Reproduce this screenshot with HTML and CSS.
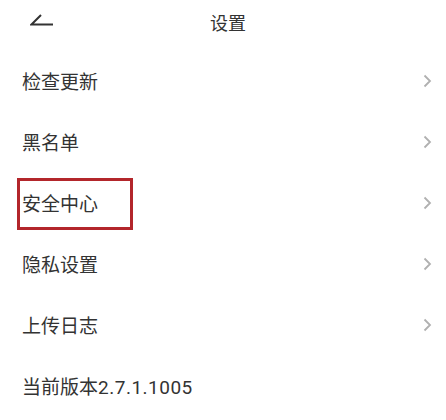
FILE: index.html
```html
<!DOCTYPE html>
<html lang="zh-CN">
<head>
    <meta charset="UTF-8">
    <meta name="viewport" content="width=device-width, initial-scale=1.0">
    <title>设置</title>
    <link rel="stylesheet" href="styles.css">
</head>
<body>
    <div class="page">
        <div class="header">
            <div class="back">
                <svg width="24" height="12" viewBox="0 0 24 12">
                    <path d="M11 1 L1.5 10.5 L23 10.5" fill="none" stroke="#333" stroke-width="2"/>
                </svg>
            </div>
            <div class="title">设置</div>
            <div class="spacer"></div>
        </div>

        <ul class="menu">
            <li class="row">
                <span>检查更新</span>
                <svg class="chevron" width="9" height="14" viewBox="0 0 9 14"><path d="M1.5 1.5 L7 7 L1.5 12.5" fill="none" stroke="#b0b0b0" stroke-width="1.8"/></svg>
            </li>
            <li class="row">
                <span>黑名单</span>
                <svg class="chevron" width="9" height="14" viewBox="0 0 9 14"><path d="M1.5 1.5 L7 7 L1.5 12.5" fill="none" stroke="#b0b0b0" stroke-width="1.8"/></svg>
            </li>
            <li class="row">
                <span>安全中心</span>
                <svg class="chevron" width="9" height="14" viewBox="0 0 9 14"><path d="M1.5 1.5 L7 7 L1.5 12.5" fill="none" stroke="#b0b0b0" stroke-width="1.8"/></svg>
                <div class="highlight"></div>
            </li>
            <li class="row">
                <span>隐私设置</span>
                <svg class="chevron" width="9" height="14" viewBox="0 0 9 14"><path d="M1.5 1.5 L7 7 L1.5 12.5" fill="none" stroke="#b0b0b0" stroke-width="1.8"/></svg>
            </li>
            <li class="row">
                <span>上传日志</span>
                <svg class="chevron" width="9" height="14" viewBox="0 0 9 14"><path d="M1.5 1.5 L7 7 L1.5 12.5" fill="none" stroke="#b0b0b0" stroke-width="1.8"/></svg>
            </li>
            <li class="row">
                <span>当前版本<span class="version">2.7.1.1005</span></span>
            </li>
        </ul>
    </div>
</body>
</html>
```

FILE: styles.css
```css
* {
    margin: 0;
    padding: 0;
    box-sizing: border-box;
}

body {
    font-family: Roboto, "Noto Sans CJK SC", sans-serif;
    background: #fff;
    color: #333;
}

.page {
    width: 446px;
    height: 420px;
    overflow: hidden;
}

.header {
    height: 50px;
    display: grid;
    grid-template-columns: 85px 1fr 75px;
    align-items: start;
}

.back {
    padding: 14px 0 0 30px;
    line-height: 0;
}

.title {
    text-align: center;
    font-size: 18px;
    line-height: 22px;
    padding-top: 13px;
    color: #333;
}

.menu {
    list-style: none;
}

.row {
    position: relative;
    height: 61px;
    display: flex;
    align-items: center;
    justify-content: space-between;
    padding: 0 14px 0 22px;
    font-size: 19px;
    color: #333;
}

.version {
    letter-spacing: 0.5px;
}

.chevron {
    display: block;
}

.highlight {
    position: absolute;
    left: 17px;
    top: 6px;
    width: 116px;
    height: 52px;
    border: 3px solid #b3262b;
}
```
